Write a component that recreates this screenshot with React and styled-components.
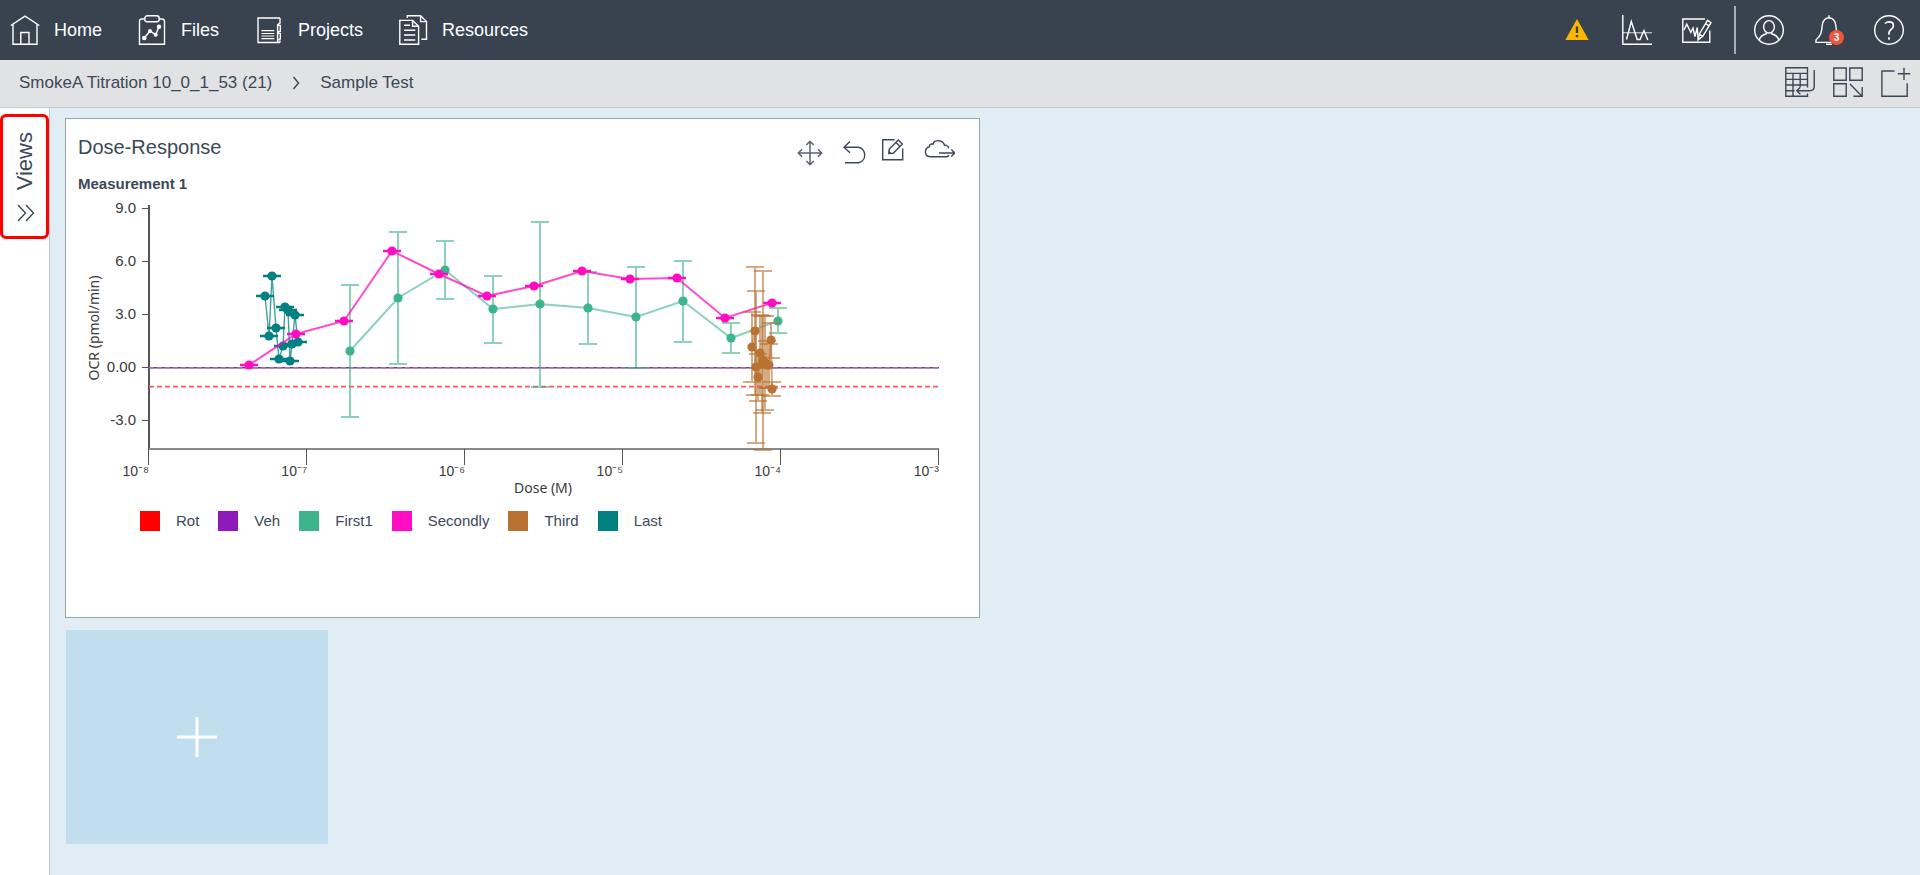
import React from "react";
import styled, { createGlobalStyle } from "styled-components";

const color = {
  header: "#38434f",
  bar: "#e1e2e4",
  ink: "#3c4858",
  line: "#c3c8cd",
  canvas: "#e0edf5",
  tile: "#c1deef",
  alert: "#f4543c",
};

const GlobalStyle = createGlobalStyle`
  * { box-sizing: border-box; }
  body {
    margin: 0;
    font-family: "Liberation Sans", Arial, sans-serif;
    color: ${color.ink};
    background: ${color.canvas};
  }
  h1, h2, h3 { margin: 0; font-weight: 400; }
`;

const Page = styled.div`
  display: flex;
  flex-direction: column;
  min-height: 100vh;
`;

const Header = styled.header`
  display: flex;
  align-items: center;
  justify-content: space-between;
  height: 60px;
  padding: 0 16px 0 10px;
  background: ${color.header};
`;

const MainNav = styled.nav`
  display: flex;
  gap: 35px;
`;

const NavLink = styled.a`
  display: flex;
  align-items: center;
  gap: 14px;
  color: #fff;
  font-size: 18px;
  line-height: 30px;
  text-decoration: none;
`;

const HeaderTools = styled.div`
  display: flex;
  align-items: center;
  gap: ${(p) => p.$gap}px;
`;

const Divider = styled.span`
  width: 2px;
  height: 48px;
  margin: 0 18px 0 22px;
  background: #a9b0b7;
`;

const IconButton = styled.button`
  position: relative;
  display: flex;
  align-items: center;
  justify-content: center;
  width: ${(p) => p.$size || 30}px;
  height: ${(p) => p.$size || 30}px;
  padding: 0;
  border: 0;
  background: none;
  color: ${(p) => p.$color || color.ink};
  cursor: pointer;
`;

const Badge = styled.span`
  position: absolute;
  right: 0;
  bottom: 0;
  width: 15px;
  height: 15px;
  border-radius: 50%;
  background: ${color.alert};
  color: #fff;
  font-size: 10px;
  font-weight: 700;
  line-height: 15px;
  text-align: center;
`;

const SubBar = styled.div`
  display: flex;
  align-items: center;
  justify-content: space-between;
  height: 48px;
  padding: 0 9px 3px 19px;
  border-bottom: 1px solid ${color.line};
  background: ${color.bar};
`;

const Breadcrumb = styled.nav`
  display: flex;
  align-items: center;
  gap: 20px;
  padding-top: 2px;
  font-size: 17px;
  line-height: 24px;
`;

const Crumb = styled.a`
  color: inherit;
  text-decoration: none;
`;

const Body = styled.div`
  display: flex;
  flex: 1;
`;

const Sidebar = styled.aside`
  flex: none;
  width: 50px;
  padding-top: 6px;
  border-right: 1px solid ${color.line};
  background: #fff;
`;

const ViewsToggle = styled.button`
  display: flex;
  flex-direction: column;
  align-items: center;
  gap: 14px;
  width: 100%;
  height: 125px;
  padding: 15px 0 0;
  border: 3px solid #f00;
  border-radius: 6px;
  background: #fff;
  color: ${color.ink};
  font: 22px/24px "Liberation Sans", Arial, sans-serif;
  cursor: pointer;
`;

const VerticalLabel = styled.span`
  writing-mode: vertical-rl;
  transform: rotate(180deg);
`;

const Canvas = styled.main`
  display: grid;
  flex: 1;
  grid-template-columns: repeat(2, minmax(0, 1fr));
  align-content: start;
  gap: 12px 10px;
  padding: 10px 15px 24px;
`;

const Card = styled.section`
  grid-column: 1;
  min-height: 500px;
  border: 1px solid #98a4ae;
  background: #fff;
`;

const CardHeader = styled.div`
  display: flex;
  align-items: center;
  justify-content: space-between;
  padding: 16px 24px 0 12px;
`;

const CardTitle = styled.h2`
  padding-bottom: 9px;
  font-size: 20px;
  line-height: 24px;
`;

const CardTools = styled.div`
  display: flex;
  gap: 11px;
`;

const Measurement = styled.h3`
  padding: 6px 12px;
  font-size: 15px;
  font-weight: 700;
  line-height: 20px;
`;

const Plot = styled.svg`
  display: block;
  width: 100%;
  font-family: "Liberation Sans", Arial, sans-serif;
  fill: #3a3a3a;
`;

const Legend = styled.ul`
  display: flex;
  flex-wrap: wrap;
  gap: 8px 19px;
  margin: 11px 0 0;
  padding: 0 12px 0 74px;
  list-style: none;
`;

const LegendItem = styled.li`
  display: flex;
  align-items: center;
  gap: 16px;
  font-size: 15px;
  line-height: 20px;
`;

const Swatch = styled.span`
  width: 20px;
  height: 20px;
  background: ${(p) => p.$color};
`;

const AddTile = styled.button`
  display: flex;
  grid-column: 1;
  align-items: center;
  justify-content: center;
  width: 262px;
  height: 214px;
  margin-left: 1px;
  padding: 0;
  border: 0;
  background: ${color.tile};
  color: #fff;
  cursor: pointer;
`;

function Icon({ size = 30, width, children, stroke = 1.4 }) {
  const w = width || size;
  return (
    <svg
      width={w}
      height={size}
      viewBox={`0 0 ${w} ${size}`}
      fill="none"
      stroke="currentColor"
      strokeWidth={stroke}
      aria-hidden="true"
    >
      {children}
    </svg>
  );
}

const HomeIcon = () => (
  <Icon>
    <path d="M.8 10.5 15 1.2 29.3 10.5M3 9.3v20h24v-20M10.8 29.3V17.5h8.2v11.8" />
  </Icon>
);

const FilesIcon = () => (
  <Icon>
    <path d="M7.5 4H5Q2.5 4 2.5 6.4V29.3H27.5V6.4Q27.5 4 25 4H22.5" />
    <rect x="7.8" y=".8" width="14.4" height="6" rx="2.6" />
    <path d="M7.3 23 13 16l5.7 3.7L22 11.8" />
    <g fill="currentColor" stroke="none">
      <circle cx="7.3" cy="23" r="2.3" />
      <circle cx="13" cy="16" r="2" />
      <circle cx="18.7" cy="19.7" r="2" />
      <circle cx="22" cy="11.8" r="2.3" />
    </g>
  </Icon>
);

const ProjectsIcon = () => (
  <Icon>
    <path d="M26 3H4V27.5H26M26 3V8.2L23.6 9.6V27M26 8.2V3M23.8 10.4H26.3V16.2L23.8 17.2M23.8 18.4H26.3V24L23.8 25M26 27.5V25.6" />
    <path d="M7.4 15.7H20.3M7.4 18.5H20.3M7.4 21H20.3M7.4 23.6H20.3" strokeWidth="1.2" />
  </Icon>
);

const ResourcesIcon = () => (
  <Icon>
    <path d="M1.8 5.4H14.6L20.6 11.2V29.3H1.8ZM14.6 5.4V11.2H20.6" />
    <path d="M9.3 3V.8H22.6L28.5 6.6V24.3H23.3M22.6.8V6.6H28.5" />
    <path d="M6 10.2H12M6 15.2H17.3M6 20H17.3M6 25H17.3" />
  </Icon>
);

const WarningIcon = () => (
  <Icon>
    <path d="M15 4 26.7 25H3.3Z" fill="#fdb600" stroke="none" />
    <path d="M15 11.5V18M15 20V22.3" stroke="#38434f" strokeWidth="2.4" />
  </Icon>
);

const WaveIcon = () => (
  <Icon>
    <path d="M.8 0V29.3H30" />
    <path d="M1 17.7H30" strokeOpacity=".6" />
    <path d="M4.5 24.5 9.3 6.5 15.2 24.5H18L22 15.5 25.8 25M20 19.5l2-4" />
  </Icon>
);

const WaveEditIcon = () => (
  <Icon>
    <path d="M23 4H.8V27.3H27.8V15.5" />
    <path d="M2 15 4.8 9.2 8.8 17.5 11 13 13 21.5 15.3 12.5 16.2 24.5" />
    <path d="M16.2 24.8 17.3 19.2 25.5 5.3 29 7.6 20.8 21.3ZM23.5 8.5 27.1 10.8M17.5 19.3 20.6 21.3" />
  </Icon>
);

const UserIcon = () => (
  <Icon>
    <circle cx="15" cy="15" r="14.3" />
    <ellipse cx="15" cy="11.8" rx="5.4" ry="6.2" />
    <path d="M5 25.3Q6.5 20.2 12.4 18.7V17M17.6 17V18.7Q23.5 20.2 25 25.3" />
  </Icon>
);

const BellIcon = () => (
  <Icon>
    <path d="M15 .3V3M15 2.7Q9 3.2 8.2 10.5C7.7 17.5 6.9 20.5 2 25V27.4H27V25C23.5 21 22.3 17 21.8 10.5Q21 3.2 15 2.7Z" />
    <path d="M12 29.3H18" />
  </Icon>
);

const HelpIcon = () => (
  <Icon>
    <circle cx="15" cy="15" r="14.3" />
    <path d="M11 8.5Q12.5 6.8 15.2 6.8 19.4 6.8 19.4 10.4 19.4 12.6 17.2 14.3 15 16 15 17.8V19.8M15 22.3V24.8" strokeWidth="1.7" />
  </Icon>
);

const TableReturnIcon = () => (
  <Icon>
    <path d="M22.5 20.5V.8H.8V29.3H22.5V26.5M.8 6.4H22.5M.8 12.4H22.5M.8 18H22.5M.8 23.8H9.5M8 6.4V29.3M15.2 6.4V20" />
    <path d="M29.2 3V19.5Q29.2 23.7 24.5 23.7H11.8M15.3 20.2 11.8 23.7 15.3 27.2" />
  </Icon>
);

const ArrangeIcon = () => (
  <Icon>
    <path d="M.8 1H13.2V13.2H.8ZM16.8 1H29.2V13.2H16.8ZM.8 16.8H13.2V29.2H.8Z" />
    <path d="M17 17 29 29.2M29.2 20V29.2H20.5" />
  </Icon>
);

const AddPanelIcon = () => (
  <Icon>
    <path d="M13.5 4H.9V29.3H26.2V16.3M23 .8V13M16.8 6.8H29.3" />
  </Icon>
);

const MoveIcon = () => (
  <Icon size={32} stroke={1.5}>
    <path d="M4.5 17H27.5M16 5.5V28.5M12.3 9 16 5.3 19.7 9M12.3 25 16 28.7 19.7 25M8 13.3 4.3 17 8 20.7M24 13.3 27.7 17 24 20.7" strokeOpacity=".85" />
  </Icon>
);

const UndoIcon = () => (
  <Icon size={32}>
    <path d="M7 11.2H21.5A8 8 0 0 1 21.5 26.8H8M13 5.5 7 11.2 13 16.8" />
  </Icon>
);

const EditIcon = () => (
  <Icon size={32}>
    <path d="M14.5 3.7H2.7V23.7H22.7V12.5" />
    <path d="M9 17.5 9.2 13.2 18.3 4 22.4 8 13.2 17.3ZM16 6.4 20 10.4" />
    <path d="M8.5 18V14.3L12.3 18Z" fill="currentColor" stroke="none" />
  </Icon>
);

const CloudExportIcon = () => (
  <Icon size={32}>
    <path d="M25.5 12.5C26 10 23 8.8 21.5 9.2 20 3.5 11.3 3.2 10 8.2 7.5 7.5 6.2 9 6.5 10.8 1 12 1 20.5 7 20.7H24Q25.5 20.5 25.8 19" />
    <path d="M16 17H31.5M28.3 13.6 31.7 17 28.3 20.4" />
  </Icon>
);

const purple = "#8f1abb";
const green = "#3db489";
const pink = "#ff0dc0";
const brown = "#b87333";
const teal = "#008080";

const series = [
  { name: "Rot", color: "#ff0000" },
  { name: "Veh", color: purple },
  { name: "First1", color: green },
  { name: "Secondly", color: pink },
  { name: "Third", color: brown },
  { name: "Last", color: teal },
];

/* Points are [x, y, top of error bar, bottom of error bar] */
const firstPoints = [
  [350, 351, 285, 417], [398, 298, 232, 364], [445, 270, 241, 299],
  [493, 309, 276, 343], [540, 304, 222, 387], [588, 308, 272, 344],
  [636, 317, 267, 368], [683, 301, 261, 342], [731, 338, 323, 353],
  [778, 321, 308, 333],
];
const secondPoints = [
  [249, 365], [296, 334], [344, 321], [392, 251], [439, 274], [487, 296],
  [534, 286], [582, 271], [630, 279], [677, 278], [725, 318], [772, 303],
].map(([x, y]) => [x, y, y, y]);
const thirdPoints = [
  [752, 347, 312, 382], [755, 331, 267, 395], [756, 367, 291, 443],
  [758, 377, 354, 401], [760, 353, 315, 395], [762, 364, 316, 413],
  [763, 360, 271, 450], [765, 363, 316, 410], [767, 365, 341, 388],
  [769, 365, 344, 388], [771, 340, 323, 358], [772, 389, 382, 396],
];
const lastPoints = [
  [265, 296], [269, 336], [272, 276], [276, 328], [279, 359], [283, 346],
  [285, 307], [288, 310], [290, 361], [292, 344], [295, 315], [298, 342],
].map(([x, y]) => [x, y, y, y]);

const yTicks = [[208, "9.0"], [261, "6.0"], [314, "3.0"], [367, "0.00"], [420, "-3.0"]];
const xTicks = [[149, "10⁻⁸"], [307, "10⁻⁷"], [465, "10⁻⁶"], [623, "10⁻⁵"], [781, "10⁻⁴"], [939, "10⁻³"]];

function Series({ points, stroke, thin }) {
  const flat = points[0][2] === points[0][3];
  return (
    <g>
      <polyline
        points={points.map(([x, y]) => `${x},${y}`).join(" ")}
        fill="none"
        stroke={stroke}
        strokeOpacity={flat ? 0.75 : 0.6}
        strokeWidth={thin ? 1.4 : 2}
      />
      {points.map(([x, y, top, bottom], i) => (
        <g key={i}>
          <path
            d={`M${x - 9} ${top}H${x + 9}M${x} ${top}V${bottom}M${x - 9} ${bottom}H${x + 9}`}
            fill="none"
            stroke={stroke}
            strokeOpacity={flat ? 1 : 0.6}
            strokeWidth={flat ? 2.4 : 2}
          />
          <circle cx={x} cy={y} r="4.6" fill={stroke} />
        </g>
      ))}
    </g>
  );
}

function DoseResponsePlot() {
  return (
    <Plot viewBox="66 200 913 300" role="img" aria-label="OCR against dose">
      <g stroke="#555" fill="none">
        <path d="M149 205V450" strokeWidth="2" />
        <path d="M149 449H939" strokeWidth="2" stroke="#888" />
        {yTicks.map(([y]) => (
          <path key={y} d={`M142 ${y + 0.5}H149`} strokeWidth="1" />
        ))}
        {xTicks.map(([x]) => (
          <path key={x} d={`M${x - 0.5} 449V465`} strokeWidth="1" />
        ))}
        <path d="M149 367.8H939" strokeWidth="1.6" />
      </g>
      <path d="M149 367.8H939" stroke="#b55fe0" strokeWidth="1.6" strokeDasharray="5 3" />
      <path d="M149 386.7H939" stroke="#ff5a5a" strokeWidth="1.8" strokeDasharray="5 3" />
      <Series points={firstPoints} stroke={green} />
      <Series points={lastPoints} stroke={teal} thin />
      <Series points={secondPoints} stroke={pink} />
      <Series points={thirdPoints} stroke={brown} />
      <g fontSize="15" textAnchor="end">
        {yTicks.map(([y, label]) => (
          <text key={label} x="136" y={y + 5}>{label}</text>
        ))}
      </g>
      <g fontSize="14" textAnchor="end">
        {xTicks.map(([x, label]) => (
          <text key={label} x={x} y="476">{label}</text>
        ))}
      </g>
      <g fontFamily='"Noto Sans", sans-serif' fontSize="14" textAnchor="middle">
        <text x="543" y="493">Dose (M)</text>
        <text x="0" y="0" transform="translate(99 328) rotate(-90)">OCR (pmol/min)</text>
      </g>
    </Plot>
  );
}

export default function App() {
  return (
    <Page>
      <GlobalStyle />
      <Header>
        <MainNav aria-label="Main">
          <NavLink href="#home"><HomeIcon />Home</NavLink>
          <NavLink href="#files"><FilesIcon />Files</NavLink>
          <NavLink href="#projects"><ProjectsIcon />Projects</NavLink>
          <NavLink href="#resources"><ResourcesIcon />Resources</NavLink>
        </MainNav>
        <HeaderTools $gap={0}>
          <HeaderTools $gap={30}>
            <IconButton $color="#fff" aria-label="Warnings"><WarningIcon /></IconButton>
            <IconButton $color="#fff" aria-label="Analysis"><WaveIcon /></IconButton>
            <IconButton $color="#fff" aria-label="Edit analysis"><WaveEditIcon /></IconButton>
          </HeaderTools>
          <Divider />
          <HeaderTools $gap={30}>
            <IconButton $color="#fff" aria-label="Account"><UserIcon /></IconButton>
            <IconButton $color="#fff" aria-label="Notifications">
              <BellIcon />
              <Badge>3</Badge>
            </IconButton>
            <IconButton $color="#fff" aria-label="Help"><HelpIcon /></IconButton>
          </HeaderTools>
        </HeaderTools>
      </Header>

      <SubBar>
        <Breadcrumb aria-label="Breadcrumb">
          <Crumb href="#titration">SmokeA Titration 10_0_1_53 (21)</Crumb>
          <Icon size={14} width={8}><path d="M1.5 1 6.5 7 1.5 13" /></Icon>
          <Crumb href="#sample" aria-current="page">Sample Test</Crumb>
        </Breadcrumb>
        <HeaderTools $gap={18}>
          <IconButton aria-label="Plate data"><TableReturnIcon /></IconButton>
          <IconButton aria-label="Arrange"><ArrangeIcon /></IconButton>
          <IconButton aria-label="Add panel"><AddPanelIcon /></IconButton>
        </HeaderTools>
      </SubBar>

      <Body>
        <Sidebar>
          <ViewsToggle>
            <VerticalLabel>Views</VerticalLabel>
            <Icon size={18} width={20}>
              <path d="M3 1 10.5 9 3 17M11 1 18.5 9 11 17" />
            </Icon>
          </ViewsToggle>
        </Sidebar>
        <Canvas>
          <Card>
            <CardHeader>
              <CardTitle>Dose-Response</CardTitle>
              <CardTools>
                <IconButton $size={32} aria-label="Move"><MoveIcon /></IconButton>
                <IconButton $size={32} aria-label="Undo"><UndoIcon /></IconButton>
                <IconButton $size={32} aria-label="Edit"><EditIcon /></IconButton>
                <IconButton $size={32} aria-label="Export"><CloudExportIcon /></IconButton>
              </CardTools>
            </CardHeader>
            <Measurement>Measurement 1</Measurement>
            <DoseResponsePlot />
            <Legend>
              {series.map((s) => (
                <LegendItem key={s.name}>
                  <Swatch $color={s.color} />
                  {s.name}
                </LegendItem>
              ))}
            </Legend>
          </Card>
          <AddTile aria-label="Add view">
            <Icon size={42} stroke={3}>
              <path d="M21 1V41M1 21H41" />
            </Icon>
          </AddTile>
        </Canvas>
      </Body>
    </Page>
  );
}
